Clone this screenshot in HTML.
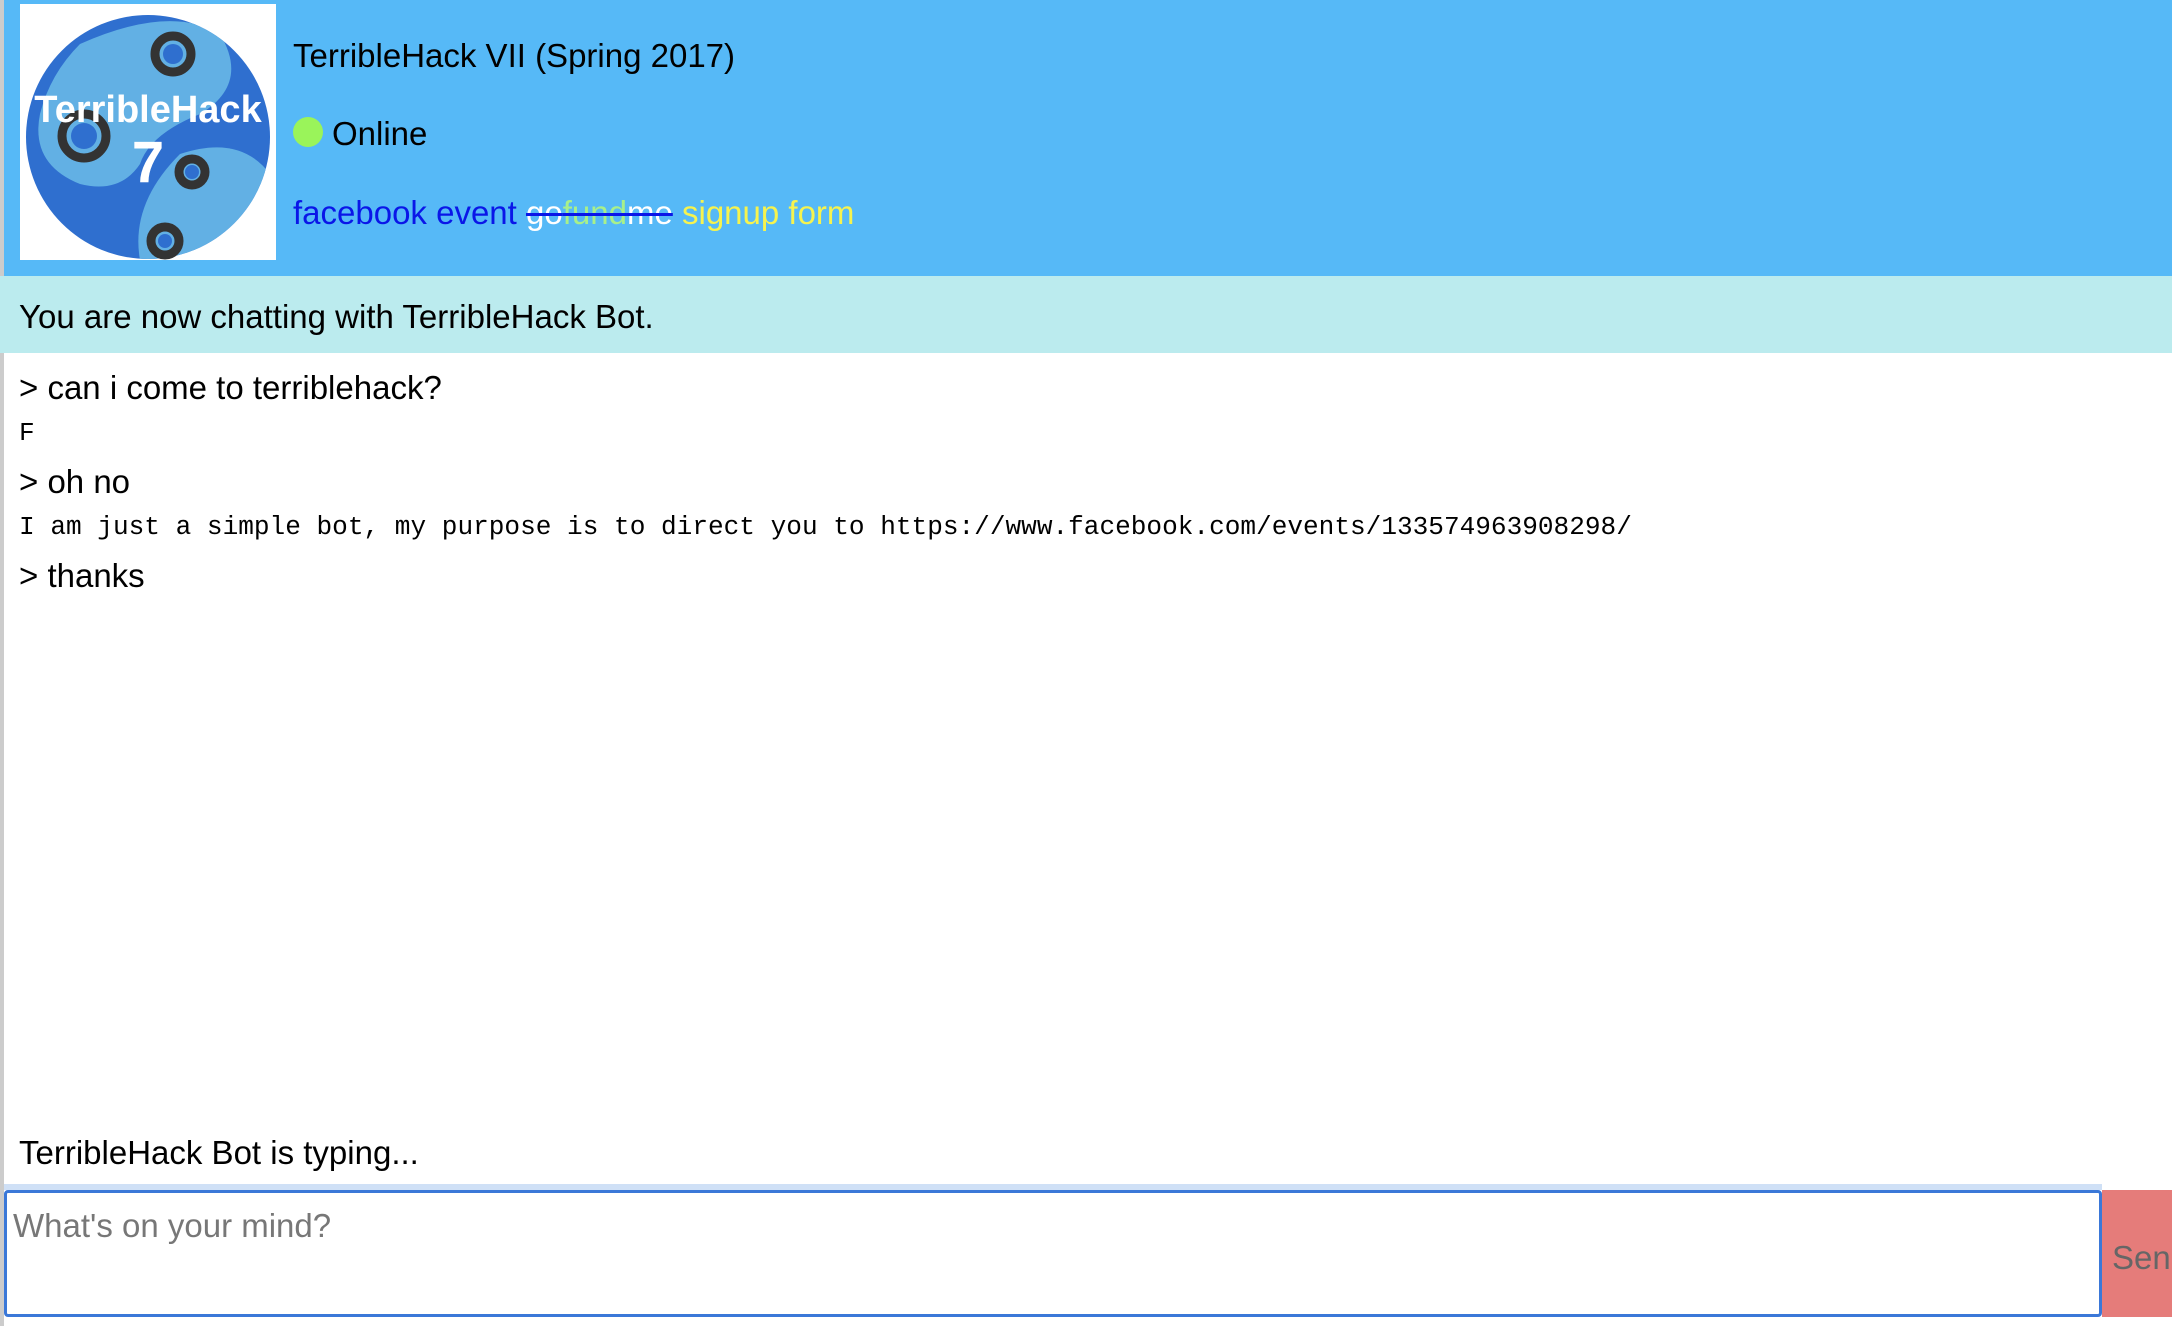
<!DOCTYPE html>
<html><head><meta charset="utf-8"><style>
html,body{margin:0;padding:0;width:2172px;height:1326px;overflow:hidden;background:#fff;font-family:"Comic Sans MS","Liberation Sans",sans-serif;}
.abs{position:absolute;white-space:nowrap}
#hdr{position:absolute;left:0;top:0;width:2172px;height:276px;background:#56b9f7}
#band{position:absolute;left:0;top:276px;width:2172px;height:77px;background:#bbebee}
.big{font-size:33px;color:#000}
.mono{font-family:"Liberation Mono",monospace;font-size:26.1px;color:#000}
</style></head><body>
<div id="hdr"></div>
<div class="abs" style="left:0;top:0;width:4px;height:1326px;background:#ccc"></div>
<div class="abs" style="left:20px;top:4px;width:256px;height:256px;background:#fff"></div>
<svg class="abs" style="left:20px;top:4px" width="256" height="256" viewBox="0 0 256 256">
<defs><clipPath id="c"><circle cx="128" cy="133" r="122"/></clipPath></defs>
<circle cx="128" cy="133" r="122" fill="#2f6fcf"/>
<g clip-path="url(#c)" fill="#62b0e4">
<path d="M60 40 Q150 0 200 30 Q230 80 180 110 Q130 130 120 160 Q100 190 60 180 Q10 160 20 110 Q30 70 60 40Z"/>
<path d="M160 150 Q220 130 250 170 Q260 230 200 256 L120 256 Q110 200 160 150Z"/>
</g>
<g fill="none" stroke="#333" stroke-width="9">
<circle cx="153" cy="50" r="18"/><circle cx="64" cy="132" r="22"/><circle cx="172" cy="168" r="13"/><circle cx="145" cy="237" r="14"/>
</g>
<g fill="#2f6fcf"><circle cx="153" cy="50" r="10"/><circle cx="64" cy="132" r="13"/><circle cx="172" cy="168" r="7"/><circle cx="145" cy="237" r="7"/></g>
<text x="128" y="118" text-anchor="middle" font-family="Liberation Sans,sans-serif" font-weight="bold" font-size="38" fill="#fff">TerribleHack</text>
<text x="128" y="178" text-anchor="middle" font-family="Liberation Sans,sans-serif" font-weight="bold" font-size="58" fill="#fff">7</text>
</svg>
<div class="abs big" style="left:293px;top:37px">TerribleHack VII (Spring 2017)</div>
<div class="abs" style="left:293px;top:117px;width:30px;height:30px;border-radius:50%;background:#9af45a"></div>
<div class="abs big" style="left:332px;top:115px">Online</div>
<div class="abs big" style="left:293px;top:194px"><span style="color:#0a16e8">facebook event</span> <span style="text-decoration:line-through;text-decoration-color:#0a16e8;text-decoration-thickness:3px"><span style="color:#fff">go</span><span style="color:#a8f08a">fund</span><span style="color:#fff">me</span></span> <span style="color:#f6f34e">signup form</span></div>
<div id="band"></div>
<div class="abs big" style="left:19px;top:298px">You are now chatting with TerribleHack Bot.</div>
<div class="abs big" style="left:19px;top:369px">&gt; can i come to terriblehack?</div>
<div class="abs mono" style="left:19px;top:418px">F</div>
<div class="abs big" style="left:19px;top:463px">&gt; oh no</div>
<div class="abs mono" style="left:19px;top:512px">I am just a simple bot, my purpose is to direct you to https://www.facebook.com/events/133574963908298/</div>
<div class="abs big" style="left:19px;top:557px">&gt; thanks</div>
<div class="abs big" style="left:19px;top:1134px">TerribleHack Bot is typing...</div>
<div class="abs" style="left:4px;top:1184px;width:2098px;height:6px;background:#cfe0f6"></div>
<div class="abs" style="left:4px;top:1190px;width:2092px;height:121px;border:3px solid #3b78d8;border-radius:4px;background:#fff"></div>
<div class="abs big" style="left:13px;top:1207px;color:#777">What's on your mind?</div>
<div class="abs" style="left:2102px;top:1190px;width:70px;height:127px;background:#e57c7a"></div>
<div class="abs big" style="left:2112px;top:1239px;color:#666">Send</div>
</body></html>
